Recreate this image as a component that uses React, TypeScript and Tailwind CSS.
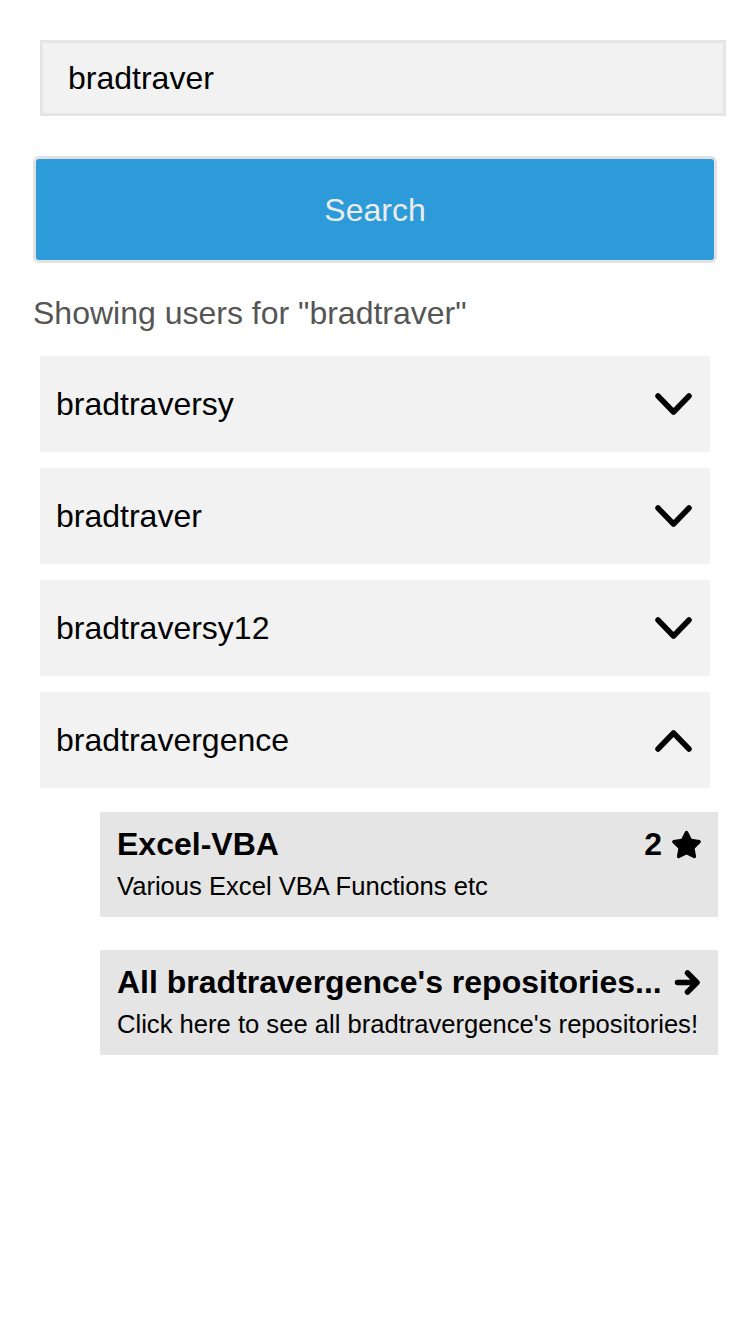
import { FC, ReactElement } from "react";
import { FaStar } from "react-icons/fa";

const users = [
  { name: "bradtraversy", open: false },
  { name: "bradtraver", open: false },
  { name: "bradtraversy12", open: false },
  { name: "bradtravergence", open: true },
];

const Chevron: FC<{ up?: boolean }> = ({ up }): ReactElement => (
  <svg width="37" height="23" viewBox="0 0 37 23" fill="none">
    <path
      d={up ? "M3 20 L18.5 4 L34 20" : "M3 3 L18.5 19 L34 3"}
      stroke="#000"
      strokeWidth="5.5"
      strokeLinecap="round"
      strokeLinejoin="round"
    />
  </svg>
);

const Arrow: FC = (): ReactElement => (
  <svg width="27" height="27" viewBox="0 0 27 27" fill="none">
    <path
      d="M3.5 13.5 H22 M13.5 4 L23 13.5 L13.5 23"
      stroke="#000"
      strokeWidth="5.5"
      strokeLinecap="round"
      strokeLinejoin="round"
    />
  </svg>
);

const UserRow: FC<{ name: string; open: boolean }> = ({ name, open }): ReactElement => (
  <div className="ml-[40px] w-[670px] h-[96px] bg-[#f2f2f2] flex items-center justify-between pl-[16px] pr-[18px]">
    <span className="text-[32px] leading-[37px] text-black">{name}</span>
    <Chevron up={open} />
  </div>
);

export default function App(): ReactElement {
  return (
    <div className="w-[750px] min-h-[1334px] bg-white flex flex-col pt-[40px] font-['Liberation_Sans',Arial,sans-serif]">
      <div className="ml-[40px] w-[686px] h-[76px] border-[3px] border-[#e5e5e5] bg-[#f2f2f2] flex items-center pl-[25px]">
        <span className="text-[32px] leading-[37px] text-black">bradtraver</span>
      </div>

      <button
        type="button"
        className="mt-[40px] ml-[33px] w-[684px] h-[107px] border-[3px] border-[#e2e2e2] rounded-[6px] bg-[#2d9bda] text-[32px] text-[#ececec] flex items-center justify-center"
      >
        Search
      </button>

      <p className="mt-[32px] ml-[33px] text-[32px] leading-[37px] text-[#555555]">
        Showing users for "bradtraver"
      </p>

      <div className="mt-[24px] flex flex-col gap-y-[16px]">
        {users.map((u) => (
          <UserRow key={u.name} name={u.name} open={u.open} />
        ))}
      </div>

      <div className="mt-[24px] ml-[100px] w-[618px] h-[105px] bg-[#e5e5e5] pt-[14px] pl-[17px] pr-[16px]">
        <div className="flex items-center justify-between">
          <span className="text-[32px] leading-[37px] font-bold text-black">Excel-VBA</span>
          <span className="flex items-center gap-x-[9px] text-[32px] leading-[37px] font-bold text-black">
            2
            <FaStar size={31} />
          </span>
        </div>
        <p className="mt-[9px] text-[25.6px] leading-[29px] text-black">Various Excel VBA Functions etc</p>
      </div>

      <div className="mt-[33px] ml-[100px] w-[618px] h-[105px] bg-[#e5e5e5] pt-[14px] pl-[17px] pr-[17px]">
        <div className="flex items-center justify-between">
          <span className="text-[32px] leading-[37px] font-bold text-black">
            All bradtravergence's repositories...
          </span>
          <Arrow />
        </div>
        <p className="mt-[9px] text-[25.6px] leading-[29px] text-black">
          Click here to see all bradtravergence's repositories!
        </p>
      </div>
    </div>
  );
}
